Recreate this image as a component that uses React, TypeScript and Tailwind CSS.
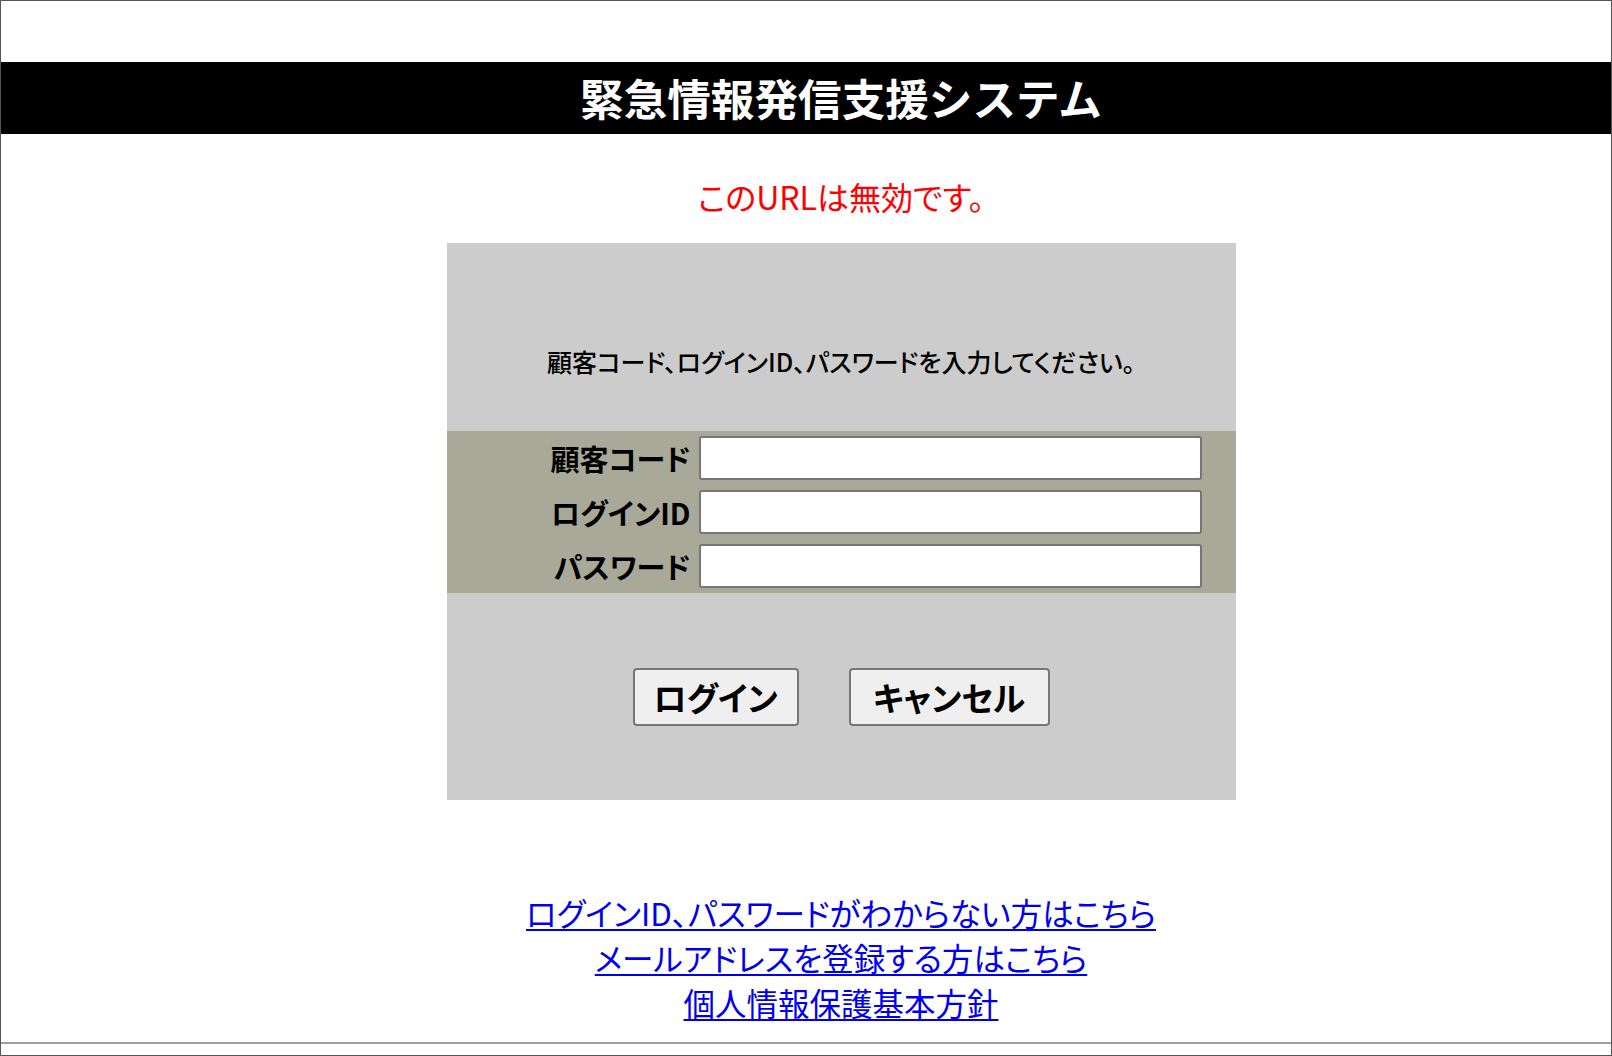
const fields = [
  { id: 'customer', label: '顧客コード', type: 'text' },
  { id: 'login', label: 'ログインID', type: 'text' },
  { id: 'password', label: 'パスワード', type: 'password' },
]

const links = [
  'ログインID、パスワードがわからない方はこちら',
  'メールアドレスを登録する方はこちら',
  '個人情報保護基本方針',
]

export default function App() {
  return (
    <div className="box-border flex h-[1056px] w-full flex-col border border-[#555555] bg-white font-['Noto_Sans_CJK_JP',sans-serif] text-black">
      <div className="h-[61px] shrink-0" />
      <div className="flex h-[72px] shrink-0 items-center justify-center bg-black pl-[70px]">
        <h1 className="text-[43.6px] font-bold leading-none text-white">緊急情報発信支援システム</h1>
      </div>

      <div className="flex flex-col items-center pl-[70px] [font-feature-settings:'palt']">
        <p className="mt-[42px] text-[32px] leading-[40px] text-[#ff0000]">このURLは無効です。</p>

        <div className="mt-[27px] flex w-[789px] flex-col bg-[#cccccc]">
          <div className="h-[188px] pt-[101px] text-center text-[25px] font-medium leading-[34px]">
            顧客コード、ログインID、パスワードを入力してください。
          </div>

          <div className="flex flex-col gap-[10px] bg-[#a9a999] py-[5px] pr-[33px]">
            {fields.map((field) => (
              <div key={field.id} className="grid grid-cols-[244px_1fr] items-center gap-[8px]">
                <label htmlFor={field.id} className="text-right text-[29px] font-bold leading-[40px]">
                  {field.label}
                </label>
                <input
                  id={field.id}
                  type={field.type}
                  className="box-border h-[44px] w-[503px] rounded-[3px] border-2 border-[#767676] bg-white px-2 text-[22px]"
                />
              </div>
            ))}
          </div>

          <div className="flex h-[207px] justify-center gap-[50px] pt-[75px]">
            <button className="box-border h-[58px] w-[166px] rounded-[4px] border-2 border-[#767676] bg-[#efefef] text-[33px] font-bold leading-none">
              ログイン
            </button>
            <button className="box-border h-[58px] w-[201px] rounded-[4px] border-2 border-[#767676] bg-[#efefef] text-[33px] font-bold leading-none">
              キャンセル
            </button>
          </div>
        </div>

        <div className="mt-[90px] flex flex-col items-center">
          {links.map((link) => (
            <a
              key={link}
              href="#"
              className="text-[31.5px] leading-[45px] text-[#0000ee] underline decoration-2 underline-offset-[3px]"
            >
              {link}
            </a>
          ))}
        </div>
      </div>

      <div className="mt-auto mb-[11px] h-[2px] shrink-0 bg-[#a0a0a0]" />
    </div>
  )
}
